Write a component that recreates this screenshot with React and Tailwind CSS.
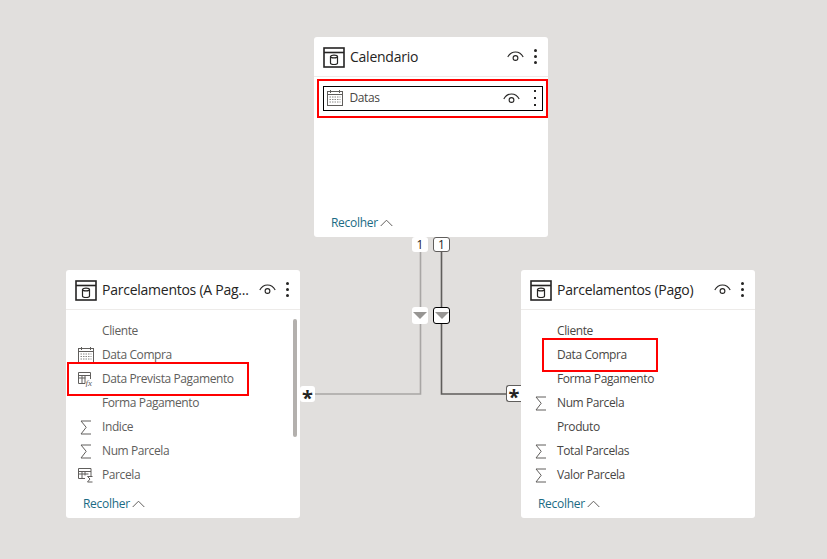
const font = "font-['Open_Sans','Noto_Sans',sans-serif]";

const TableIcon = () => (
  <svg width="22" height="21" viewBox="0 0 22 21" fill="none" className="mt-[1px] shrink-0">
    <rect x="1" y="1" width="20" height="19" stroke="#252423" strokeWidth="1.6" />
    <path d="M1 5.5H21" stroke="#252423" strokeWidth="1.6" />
    <path d="M7.5 9.5v6.5c0 .9 1.5 1.5 3.5 1.5s3.5-.6 3.5-1.5V9.5" stroke="#252423" strokeWidth="1.2" />
    <ellipse cx="11" cy="9.5" rx="3.5" ry="1.4" stroke="#252423" strokeWidth="1.2" />
  </svg>
);

const Eye = () => (
  <svg width="17" height="11" viewBox="0 0 17 11" fill="none" className="shrink-0">
    <path d="M.8 6C2.5 2.8 5.2 1 8.5 1s6 1.8 7.7 5" stroke="#252423" strokeWidth="1.1" />
    <circle cx="8.5" cy="7" r="2.4" stroke="#252423" strokeWidth="1.1" />
  </svg>
);

const Dots = ({ small }) => (
  <div className={small ? "flex w-[2px] flex-col gap-[5px]" : "flex w-[3px] flex-col gap-[3px]"}>
    <span className={small ? "h-[2px] w-[2px] bg-[#252423]" : "h-[3px] w-[3px] rounded-full bg-[#252423]"} />
    <span className={small ? "h-[2px] w-[2px] bg-[#252423]" : "h-[3px] w-[3px] rounded-full bg-[#252423]"} />
    <span className={small ? "h-[2px] w-[2px] bg-[#252423]" : "h-[3px] w-[3px] rounded-full bg-[#252423]"} />
  </div>
);

const CalendarIcon = () => (
  <svg width="16" height="16" viewBox="0 0 16 16" fill="none">
    <rect x=".5" y="1.5" width="15" height="14" stroke="#605e5c" />
    <path d="M.5 4.5h15" stroke="#605e5c" />
    <path d="M3.5 0v3M12.5 0v3" stroke="#605e5c" />
    <path d="M2.5 7h11M2.5 9.5h11M2.5 12h11" stroke="#8a8886" strokeDasharray="1.5 1" />
  </svg>
);

const CalcColumnIcon = () => (
  <svg width="16" height="15" viewBox="0 0 16 15" fill="none">
    <path d="M12.5 7V.5H.5v11H7" stroke="#605e5c" />
    <path d="M.5 3.5h12M.5 6h7M4 3.5v8M7 3.5v8" stroke="#605e5c" />
    <text x="7.5" y="14" fontSize="9" fontStyle="italic" fill="#605e5c" fontFamily="Liberation Serif">fx</text>
  </svg>
);

const MeasureIcon = () => (
  <svg width="16" height="15" viewBox="0 0 16 15" fill="none">
    <path d="M13 8V.5H.5v10H7" stroke="#605e5c" />
    <path d="M.5 3.5H13M.5 6h10M4 3.5v7M7 3.5v4" stroke="#605e5c" />
    <path d="M14.5 8.5H9.5l2.5 2.5-2.5 3h5" stroke="#605e5c" />
  </svg>
);

const SigmaIcon = () => (
  <svg width="12" height="15" viewBox="0 0 12 15" fill="none">
    <path d="M11 1H1l5.2 6.3L1 14h10" stroke="#605e5c" strokeWidth="1" />
  </svg>
);

const icons = {
  calendar: CalendarIcon,
  calc: CalcColumnIcon,
  measure: MeasureIcon,
  sigma: SigmaIcon,
};

const Field = ({ name, icon, dark }) => {
  const Icon = icons[icon];
  return (
    <div className="flex h-6 items-center">
      <div className="flex w-[36px] shrink-0 items-center justify-center pl-[3px]">{Icon && <Icon />}</div>
      <span className={`text-[12px] tracking-[-0.4px] ${dark ? "text-[#484644]" : "text-[#605e5c]"}`}>{name}</span>
    </div>
  );
};

const Collapse = () => (
  <div className="flex items-center gap-[2px] text-[12px] tracking-[-0.3px] text-[#1b6b84]">
    Recolher
    <svg width="13" height="8" viewBox="0 0 13 8" fill="none">
      <path d="M.7 7L6.5 1.2 12.3 7" stroke="#605e5c" />
    </svg>
  </div>
);

const Header = ({ title }) => (
  <div className="flex h-[40px] items-center border-b border-[#edebe9] pl-[9px] pr-[11px]">
    <TableIcon />
    <div className="ml-[5px] flex-1 truncate text-[14px] font-medium tracking-[-0.25px] text-[#252423]">{title}</div>
    <Eye />
    <div className="ml-[10px]">
      <Dots />
    </div>
  </div>
);

const Table = ({ title, fields, className, scroll, dark, children }) => (
  <div className={`absolute flex w-[234px] flex-col rounded-[3px] bg-white ${className}`}>
    <Header title={title} />
    <div className="relative mt-[9px] flex-1">
      {fields.map((f) => (
        <Field key={f.name} name={f.name} icon={f.icon} dark={dark} />
      ))}
      {scroll && <div className="absolute right-[3px] top-0 h-[118px] w-[4px] rounded-sm bg-[#b3b0ad]" />}
    </div>
    <div className="h-[23px] pl-[17px]">
      <Collapse />
    </div>
    {children}
  </div>
);

const Connector = () => (
  <svg width="827" height="559" className="absolute left-0 top-0" fill="none">
    <path d="M420.5 237V394H300" stroke="#a8a6a4" strokeWidth="1.6" />
    <path d="M441.5 237V394H521" stroke="#5f5d5b" strokeWidth="1.6" />
  </svg>
);

const Badge = ({ className, children, border }) => (
  <div className={`absolute flex items-center justify-center rounded-[3px] bg-white ${border} ${className}`}>
    {children}
  </div>
);

const Arrow = () => <div className="h-0 w-0 border-x-[7px] border-t-[7px] border-x-transparent border-t-[#979593]" />;

const App = () => {
  return (
    <div className={`relative h-[559px] w-[827px] overflow-hidden bg-[#e1dfdd] ${font}`}>
      <Connector />

      <Table title="Calendario" fields={[]} className="left-[314px] top-[37px] h-[200px]">
        <div className="absolute left-[3px] top-[42px] flex h-[39px] w-[231px] items-center border-[2.5px] border-[#ff0000] px-[3.5px]">
          <div className="flex h-[25px] w-full items-center border border-black pl-[3px] pr-[6px] pb-[1px]">
            <CalendarIcon />
            <span className="ml-[7px] flex-1 text-[12px] tracking-[-0.4px] text-[#484644]">Datas</span>
            <Eye />
            <div className="ml-[14px]">
              <Dots small />
            </div>
          </div>
        </div>
      </Table>

      <Table
        title="Parcelamentos (A Pag..."
        scroll
        className="left-[66px] top-[270px] h-[248px]"
        fields={[
          { name: "Cliente" },
          { name: "Data Compra", icon: "calendar" },
          { name: "Data Prevista Pagamento", icon: "calc" },
          { name: "Forma Pagamento" },
          { name: "Indice", icon: "sigma" },
          { name: "Num Parcela", icon: "sigma" },
          { name: "Parcela", icon: "measure" },
        ]}
      >
        <div className="absolute left-[1px] top-[92px] h-[34px] w-[182px] border-[2px] border-[#ff0000]" />
      </Table>

      <Table
        title="Parcelamentos (Pago)"
        dark
        className="left-[521px] top-[270px] h-[248px]"
        fields={[
          { name: "Cliente" },
          { name: "Data Compra" },
          { name: "Forma Pagamento" },
          { name: "Num Parcela", icon: "sigma" },
          { name: "Produto" },
          { name: "Total Parcelas", icon: "sigma" },
          { name: "Valor Parcela", icon: "sigma" },
        ]}
      >
        <div className="absolute left-[21px] top-[68px] h-[34px] w-[116px] border-[2px] border-[#ff0000]" />
      </Table>

      <Badge className="left-[412px] top-[237px] h-[15px] w-[16px] text-[12px] text-[#252423]">1</Badge>
      <Badge border="border border-[#605e5c]" className="left-[433px] top-[237px] h-[15px] w-[17px] text-[12px] text-[#252423]">1</Badge>
      <Badge className="left-[412px] top-[307px] h-[17px] w-[16px]"><Arrow /></Badge>
      <Badge border="border border-black" className="left-[433px] top-[307px] h-[17px] w-[17px]"><Arrow /></Badge>
      <Badge className="left-[300px] top-[386px] h-[16px] w-[15px] text-[20px] font-bold text-[#252423]">
        <span className="mt-[7px]">*</span>
      </Badge>
      <Badge border="border border-r-0 border-[#605e5c]" className="left-[506px] top-[385px] h-[17px] w-[15px] rounded-r-none text-[20px] font-bold text-[#252423]">
        <span className="mt-[7px]">*</span>
      </Badge>
    </div>
  );
};

export default App;
